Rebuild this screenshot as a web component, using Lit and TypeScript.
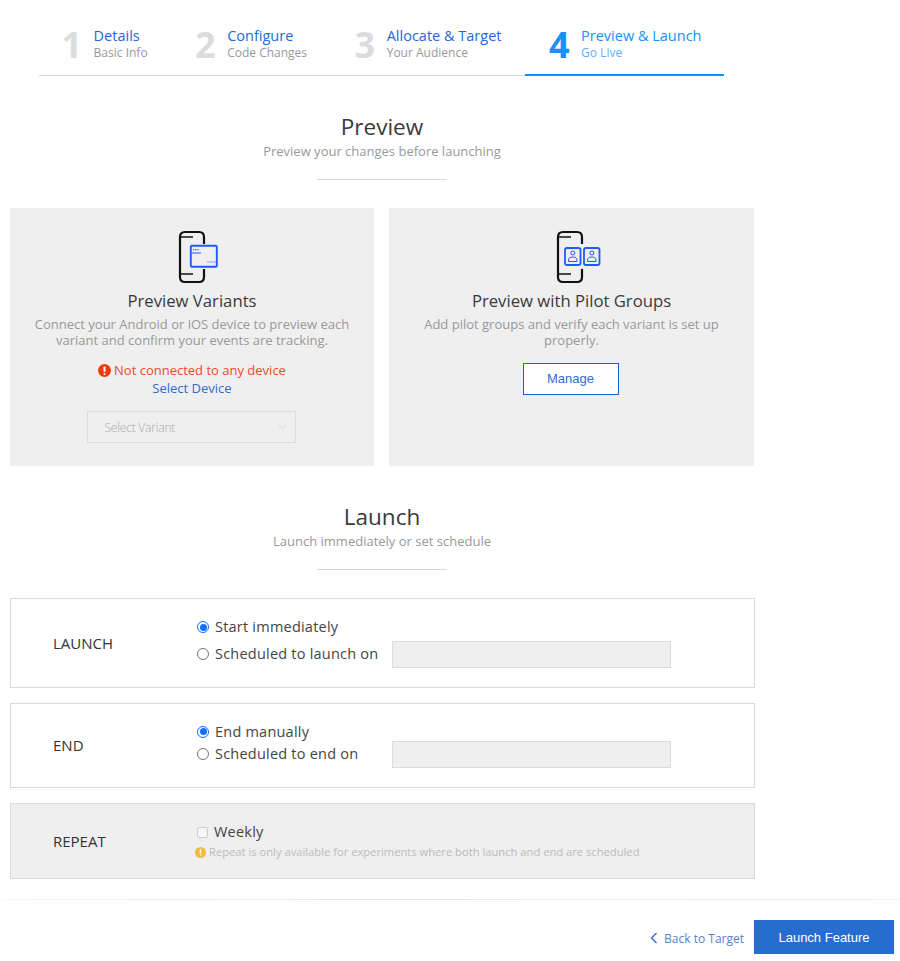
import { LitElement, html, svg, css } from "lit";
import { customElement } from "lit/decorators.js";

@customElement("app-root")
export class AppRoot extends LitElement {
  static styles = css`
    :host { display: flex; flex-direction: column; width: 900px; height: 961px; overflow: hidden; background: #fff; font-family: "Open Sans", sans-serif; color: #333; }
    * { box-sizing: border-box; }
    .main { flex: 1; min-height: 0; width: 754px; padding: 0 0 0 10px; }
    .stepper { display: flex; width: 685px; height: 76px; margin-left: 29px; padding-top: 26px; border-bottom: 1px solid #d8d8d8; white-space: nowrap; }
    .step { display: flex; gap: 11.5px; padding: 0 24px; height: 50px; }
    .step:first-child { padding-left: 23px; }
    .step:last-child { padding-right: 23px; }
    .step.active { border-bottom: 2px solid #0a90ff; }
    .num { font-size: 36px; line-height: 38px; font-weight: 700; color: #dcdcdc; margin-left: -0.5px; }
    .step-title { font-size: 14.5px; line-height: 20px; font-weight: 500; color: #2468d8; }
    .step-sub { font-size: 12px; line-height: 14px; color: #999; }
    .active .num, .active .step-title { color: #1890ff; }
    .active .step-sub { color: #5fb0ff; }
    .head { text-align: center; padding-top: 35px; }
    .head h1 { margin: 0; font-size: 22.5px; line-height: 31px; font-weight: 400; color: #3a3a3a; }
    .head p { margin: 0; font-size: 13px; line-height: 18px; color: #999; }
    .rule { width: 130px; height: 1px; background: #d8d8d8; margin: 19px auto 0; }
    .cards { display: grid; grid-template-columns: 364px 1fr; gap: 15px; margin-top: 28px; }
    .card { background: #efefef; height: 258px; padding-top: 22px; text-align: center; display: flex; flex-direction: column; align-items: center; }
    .card svg.ic { display: block; height: 54px; }
    .card svg.ic.one { margin-left: 12px; }
    .card svg.ic.two { margin-left: 14px; }
    .card h3 { margin: 6px 0 0; font-size: 16.7px; line-height: 22px; font-weight: 400; color: #3a3a3a; }
    .card p { margin: 4px 0 0; font-size: 13px; line-height: 16px; color: #999; width: 330px; }
    .err { display: flex; align-items: center; gap: 3px; margin-top: 13px; font-size: 13px; line-height: 18px; color: #f4472a; }
    .link { font-size: 13px; line-height: 18px; color: #2f6bd0; }
    .select { width: 209px; height: 32px; margin: 14px 2px 0 0; border: 1px solid #dcdcdc; display: flex; align-items: center; justify-content: space-between; padding: 0 8px 0 17px; font-size: 12px; letter-spacing: -0.2px; font-weight: 300; color: #aaa; }
    .manage { width: 96px; height: 32px; margin: 15px 2px 0 0; padding-bottom: 2px; background: #fff; border: 1px solid #1d62c9; display: flex; align-items: center; justify-content: center; font-family: "Liberation Sans", Arial, sans-serif; font-size: 13px; color: #2f6bd0; }
    .rows { display: flex; flex-direction: column; gap: 15px; margin-top: 28px; }
    .row { display: flex; border: 1px solid #dadada; width: 744.5px; }
    .row.r1 { height: 90px; padding-top: 18px; }
    .row.r2 { height: 85px; padding-top: 18px; }
    .row.r3 { height: 76px; padding-top: 18px; background: #efefef; }
    .label { width: 186px; padding-left: 42px; font-size: 15px; font-weight: 500; color: #333; line-height: 20px; flex: none; }
    .r1 .label { margin-top: 16px; }
    .r2 .label { margin-top: 13px; }
    .r3 .label { margin-top: 9px; }
    .opt { display: flex; align-items: center; font-size: 14.5px; line-height: 20px; color: #444; letter-spacing: 0.22px; }
    .opt .radio { width: 12px; height: 12px; border-radius: 50%; border: 1px solid #777; background: #fff; margin: 0 6px 0 0; flex: none; position: relative; }
    .opt + .opt .radio { margin-bottom: 2px; }
    .opt .radio.on { border-color: #0f6fff; }
    .opt .radio.on::after { content: ""; position: absolute; inset: 1.5px; border-radius: 50%; background: #0f6fff; }
    .r1 .opt + .opt { margin-top: 4px; }
    .r2 .opt:first-child { height: 19px; }
    .opt-text { width: 177px; margin-bottom: 2px; }
    .input { width: 279px; height: 27px; background: #efefef; border: 1px solid #dcdcdc; }
    .check { width: 11px; height: 11px; border: 1px solid #ccc; border-radius: 2px; background: #f6f6f6; margin-right: 6px; }
    .note { display: flex; align-items: center; gap: 3px; margin-top: 1px; font-size: 11.2px; line-height: 18px; color: #bbb; margin-left: -2px; white-space: nowrap; }
    .footer { height: 62px; flex: none; border-top: 1px solid #ececec; border-image: linear-gradient(90deg, #f8f8f8, #e6e6e6 40%, #f2f2f2 100%) 1; display: flex; justify-content: flex-end; align-items: flex-start; padding: 20px 6px 0 0; gap: 10px; }
    .back { display: flex; align-items: center; gap: 6px; height: 36px; font-size: 12px; color: #5580c8; }
    .launch { width: 140px; height: 34px; background: #276ccf; color: #fff; display: flex; align-items: center; justify-content: center; font-family: "Liberation Sans", Arial, sans-serif; font-size: 13px; }
  `;

  private step(n: string, t: string, s: string, active = false) {
    return html`<div class="step ${active ? "active" : ""}"><div class="num">${n}</div><div><div class="step-title">${t}</div><div class="step-sub">${s}</div></div></div>`;
  }

  private phoneBody() {
    return svg`<path d="M26 14V7Q26 2 21 2H7Q2 2 2 7V47Q2 52 7 52H21Q26 52 26 47V39" fill="none" stroke="#111" stroke-width="2.2"/>
      <path d="M3 7H15M3 44H15" fill="none" stroke="#111" stroke-width="1.5"/>`;
  }

  private person(x: number) {
    return svg`<rect x="${x}" y="18" width="15.5" height="17" rx="2" fill="none" stroke="#1f5bff" stroke-width="1.8"/>
      <circle cx="${x + 7.8}" cy="23" r="2" fill="none" stroke="#1f5bff" stroke-width="1"/>
      <path d="M${x + 3.5} 31.5V30Q${x + 3.5} 27 ${x + 7.8} 27Q${x + 12} 27 ${x + 12} 30V31.5Z" fill="none" stroke="#1f5bff" stroke-width="1"/>`;
  }

  render() {
    return html`
      <div class="main">
        <div class="stepper">
          ${this.step("1", "Details", "Basic Info")}
          ${this.step("2", "Configure", "Code Changes")}
          ${this.step("3", "Allocate & Target", "Your Audience")}
          ${this.step("4", "Preview & Launch", "Go Live", true)}
        </div>
        <div class="head"><h1>Preview</h1><p>Preview your changes before launching</p><div class="rule"></div></div>
        <div class="cards">
          <div class="card">
            <svg class="ic one" width="41" height="54" viewBox="0 0 41 54">
              ${this.phoneBody()}
              <rect x="12.8" y="15.8" width="26" height="21" rx="1" fill="none" stroke="#1f5bff" stroke-width="1.9"/>
              <path d="M15 19.7H16.2M17.2 19.7H18.4M19.4 19.7H20.6" stroke="#1f5bff" stroke-width="1.2" fill="none"/>
              <path d="M14 23H23" stroke="#1f5bff" stroke-width="1" fill="none"/>
              <path d="M29 32H38" stroke="#8b9fe8" stroke-width="1" fill="none"/>
            </svg>
            <h3>Preview Variants</h3>
            <p>Connect your Android or iOS device to preview each variant and confirm your events are tracking.</p>
            <div class="err">
              <svg width="13" height="13" viewBox="0 0 13 13"><circle cx="6.5" cy="6.5" r="6.5" fill="#f03a0e"/><rect x="5.5" y="2.5" width="2" height="5.5" rx="0.8" fill="#fff"/><rect x="5.5" y="9" width="2" height="2" rx="1" fill="#fff"/></svg>
              Not connected to any device
            </div>
            <div class="link">Select Device</div>
            <div class="select">Select Variant
              <svg width="9" height="6" viewBox="0 0 9 6"><path d="M1 1L4.5 4.5L8 1" fill="none" stroke="#d4d4d4" stroke-width="1"/></svg>
            </div>
          </div>
          <div class="card">
            <svg class="ic two" width="45" height="54" viewBox="0 0 45 54">
              ${this.phoneBody()}
              ${this.person(9)}
              ${this.person(28)}
            </svg>
            <h3>Preview with Pilot Groups</h3>
            <p>Add pilot groups and verify each variant is set up properly.</p>
            <div class="manage">Manage</div>
          </div>
        </div>
        <div class="head"><h1>Launch</h1><p>Launch immediately or set schedule</p><div class="rule"></div></div>
        <div class="rows">
          <div class="row r1">
            <div class="label">LAUNCH</div>
            <div>
              <div class="opt"><span class="radio on"></span>Start immediately</div>
              <div class="opt"><span class="radio"></span><span class="opt-text">Scheduled to launch on</span><span class="input"></span></div>
            </div>
          </div>
          <div class="row r2">
            <div class="label">END</div>
            <div>
              <div class="opt"><span class="radio on"></span>End manually</div>
              <div class="opt"><span class="radio"></span><span class="opt-text">Scheduled to end on</span><span class="input"></span></div>
            </div>
          </div>
          <div class="row r3">
            <div class="label">REPEAT</div>
            <div>
              <div class="opt"><span class="check"></span>Weekly</div>
              <div class="note">
                <svg width="11" height="11" viewBox="0 0 11 11"><circle cx="5.5" cy="5.5" r="5.5" fill="#f0bd3f"/><rect x="4.8" y="2" width="1.4" height="4.5" rx="0.6" fill="#fff"/><rect x="4.8" y="7.3" width="1.4" height="1.4" rx="0.7" fill="#fff"/></svg>
                Repeat is only available for experiments where both launch and end are scheduled
              </div>
            </div>
          </div>
        </div>
      </div>
      <div class="footer">
        <div class="back">
          <svg width="8" height="12" viewBox="0 0 8 12"><path d="M6.5 1L1.5 6L6.5 11" fill="none" stroke="#3f74cf" stroke-width="1.5"/></svg>
          Back to Target
        </div>
        <div class="launch">Launch Feature</div>
      </div>
    `;
  }
}
